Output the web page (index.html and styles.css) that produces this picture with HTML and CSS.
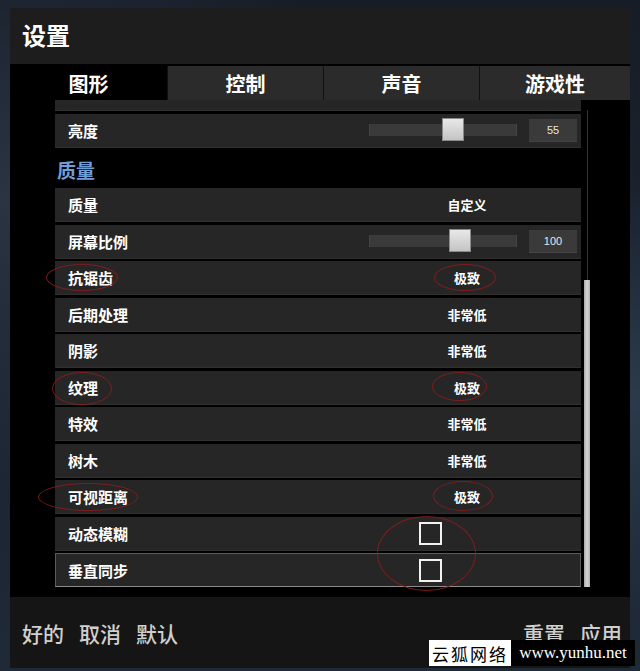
FILE: index.html
```html
<!DOCTYPE html>
<html lang="zh-CN">
<head>
    <meta charset="UTF-8">
    <meta name="viewport" content="width=device-width, initial-scale=1.0">
    <title>设置</title>
    <link rel="stylesheet" href="styles.css">
</head>
<body>
    <div class="page">
        <div class="panel">
            <div class="header">设置</div>

            <div class="tabs">
                <div class="tab active">图形</div>
                <div class="tab">控制</div>
                <div class="tab">声音</div>
                <div class="tab">游戏性</div>
            </div>

            <div class="content">
                <div class="list">
                    <div class="row stub"></div>

                    <div class="row">
                        <div class="label slider-label">亮度</div>
                        <div class="track"><div class="thumb" style="left: 72px"></div></div>
                        <div class="num">55</div>
                    </div>

                    <div class="section">质量</div>

                    <div class="row">
                        <div class="label">质量</div>
                        <div class="value">自定义</div>
                    </div>
                    <div class="row">
                        <div class="label slider-label">屏幕比例</div>
                        <div class="track"><div class="thumb" style="left: 79px"></div></div>
                        <div class="num">100</div>
                    </div>
                    <div class="row">
                        <div class="label">抗锯齿</div>
                        <div class="value">极致</div>
                    </div>
                    <div class="row">
                        <div class="label">后期处理</div>
                        <div class="value">非常低</div>
                    </div>
                    <div class="row">
                        <div class="label">阴影</div>
                        <div class="value">非常低</div>
                    </div>
                    <div class="row">
                        <div class="label">纹理</div>
                        <div class="value">极致</div>
                    </div>
                    <div class="row">
                        <div class="label">特效</div>
                        <div class="value">非常低</div>
                    </div>
                    <div class="row">
                        <div class="label">树木</div>
                        <div class="value">非常低</div>
                    </div>
                    <div class="row">
                        <div class="label">可视距离</div>
                        <div class="value">极致</div>
                    </div>
                    <div class="row">
                        <div class="label">动态模糊</div>
                        <div class="check"></div>
                    </div>
                    <div class="row selected">
                        <div class="label">垂直同步</div>
                        <div class="check"></div>
                    </div>
                </div>

                <div class="scrollbar">
                    <div class="scroll-track"></div>
                    <div class="scroll-thumb"></div>
                </div>
            </div>

            <div class="footer">
                <div class="actions">
                    <span>好的</span>
                    <span>取消</span>
                    <span>默认</span>
                </div>
                <div class="actions">
                    <span>重置</span>
                    <span>应用</span>
                </div>
            </div>
        </div>

        <!-- red marks drawn over the screenshot -->
        <div class="mark m1"></div>
        <div class="mark m2"></div>
        <div class="mark m3"></div>
        <div class="mark m4"></div>
        <div class="mark m5"></div>
        <div class="mark m6"></div>
        <div class="mark m7"></div>

        <div class="watermark">
            <span class="wm-cn">云狐网络</span>
            <span class="wm-en">www.yunhu.net</span>
        </div>
    </div>
</body>
</html>
```

FILE: styles.css
```css
* {
    margin: 0;
    padding: 0;
    box-sizing: border-box;
}

body {
    font-family: 'Noto Sans CJK SC', 'Noto Sans', sans-serif;
    background: #1b2430;
    overflow: hidden;
}

.page {
    position: relative;
    width: 640px;
    height: 671px;
    padding: 8px 10px 0;
    background:
        radial-gradient(ellipse at 100% 60%, #2b3a4c 0%, transparent 40%),
        radial-gradient(ellipse at 0% 30%, #2a3442 0%, transparent 45%),
        linear-gradient(180deg, #161d27 0%, #1f2a37 100%);
}

.panel {
    width: 620px;
    background: #000;
}

.header {
    height: 56px;
    background: #1d1d1d;
    color: #fff;
    font-size: 24px;
    font-weight: 700;
    display: flex;
    align-items: center;
    padding-left: 12px;
    padding-bottom: 3px;
}

.tabs {
    display: grid;
    grid-template-columns: 157px 155px 155px 1fr;
    gap: 1px;
    margin-top: 2px;
    background: #111;
}

.tab {
    height: 34px;
    background: #2b2b2b;
    color: #fff;
    font-size: 20px;
    font-weight: 700;
    display: flex;
    align-items: center;
    justify-content: center;
}

.tab.active {
    background: #000;
}

.content {
    height: 497px;
    display: flex;
    overflow: hidden;
}

.list {
    width: 526px;
    margin-left: 45px;
}

.row {
    height: 34px;
    margin-bottom: 2.5px;
    background: #262626;
    border-bottom: 1px solid #303030;
    display: flex;
    align-items: center;
    padding-left: 13px;
    color: #fff;
}

.row.stub {
    height: 11px;
}

.row.selected {
    border: 1px solid #5a5a5a;
    border-bottom-color: #8c8c8c;
    padding-left: 12px;
}

.label {
    flex: 0 0 349px;
    font-size: 15px;
    font-weight: 700;
}

.label.slider-label {
    flex-basis: 301px;
}

.value {
    width: 100px;
    text-align: center;
    font-size: 13px;
    font-weight: 700;
}

.check {
    width: 23px;
    height: 23px;
    margin-left: 2px;
    border: 2px solid #f2f2f2;
}

.track {
    position: relative;
    width: 148px;
    height: 12px;
    background: #3a3a3a;
    border-left: 1px solid #444;
    border-right: 1px solid #444;
}

.thumb {
    position: absolute;
    top: -6px;
    width: 22px;
    height: 23px;
    background: linear-gradient(180deg, #e8e8e8 0%, #c4c4c4 100%);
    border: 1px solid #8a8a8a;
}

.num {
    width: 48px;
    height: 23px;
    margin-left: 12px;
    background: #3a3a3a;
    border-bottom: 1px solid #444;
    color: #e6e6e6;
    font-family: 'Liberation Sans Narrow', 'Liberation Sans', sans-serif;
    font-size: 11px;
    display: flex;
    align-items: center;
    justify-content: center;
}

.section {
    height: 38px;
    margin-bottom: 0;
    padding-left: 2px;
    display: flex;
    align-items: center;
    color: #6f9fd6;
    font-size: 19px;
    font-weight: 700;
}

.scrollbar {
    width: 6px;
    margin-left: 3px;
    padding-top: 10px;
    display: flex;
    flex-direction: column;
    align-items: center;
}

.scroll-track {
    width: 1px;
    height: 170px;
    background: #333;
}

.scroll-thumb {
    width: 6px;
    height: 307px;
    background: linear-gradient(90deg, #a8a8a8 0%, #d6d6d6 50%, #b0b0b0 100%);
}

.footer {
    height: 71px;
    background: #151515;
    display: flex;
    align-items: center;
    justify-content: space-between;
    padding: 0 8px 0 12px;
}

.actions {
    display: flex;
    gap: 15px;
    color: #cfcfcf;
    font-size: 21px;
    font-weight: 500;
}

.mark {
    position: absolute;
    border: 1.5px solid rgba(140, 28, 28, 0.85);
    border-radius: 50%;
}

.m1 { left: 46px; top: 264px; width: 72px; height: 27px; }
.m2 { left: 434px; top: 264px; width: 62px; height: 27px; }
.m3 { left: 52px; top: 372px; width: 60px; height: 33px; }
.m4 { left: 432px; top: 372px; width: 55px; height: 29px; }
.m5 { left: 38px; top: 483px; width: 100px; height: 28px; }
.m6 { left: 433px; top: 481px; width: 60px; height: 30px; }
.m7 { left: 377px; top: 516px; width: 99px; height: 75px; }

.watermark {
    position: absolute;
    left: 429px;
    top: 640px;
    display: flex;
    height: 26px;
}

.wm-cn {
    width: 82px;
    background: #fff;
    color: #000;
    font-size: 17px;
    letter-spacing: 2px;
    display: flex;
    align-items: center;
    justify-content: center;
}

.wm-en {
    width: 124px;
    background: #000;
    color: #fff;
    font-family: 'Liberation Serif', serif;
    font-size: 17px;
    display: flex;
    align-items: center;
    justify-content: center;
}
```
